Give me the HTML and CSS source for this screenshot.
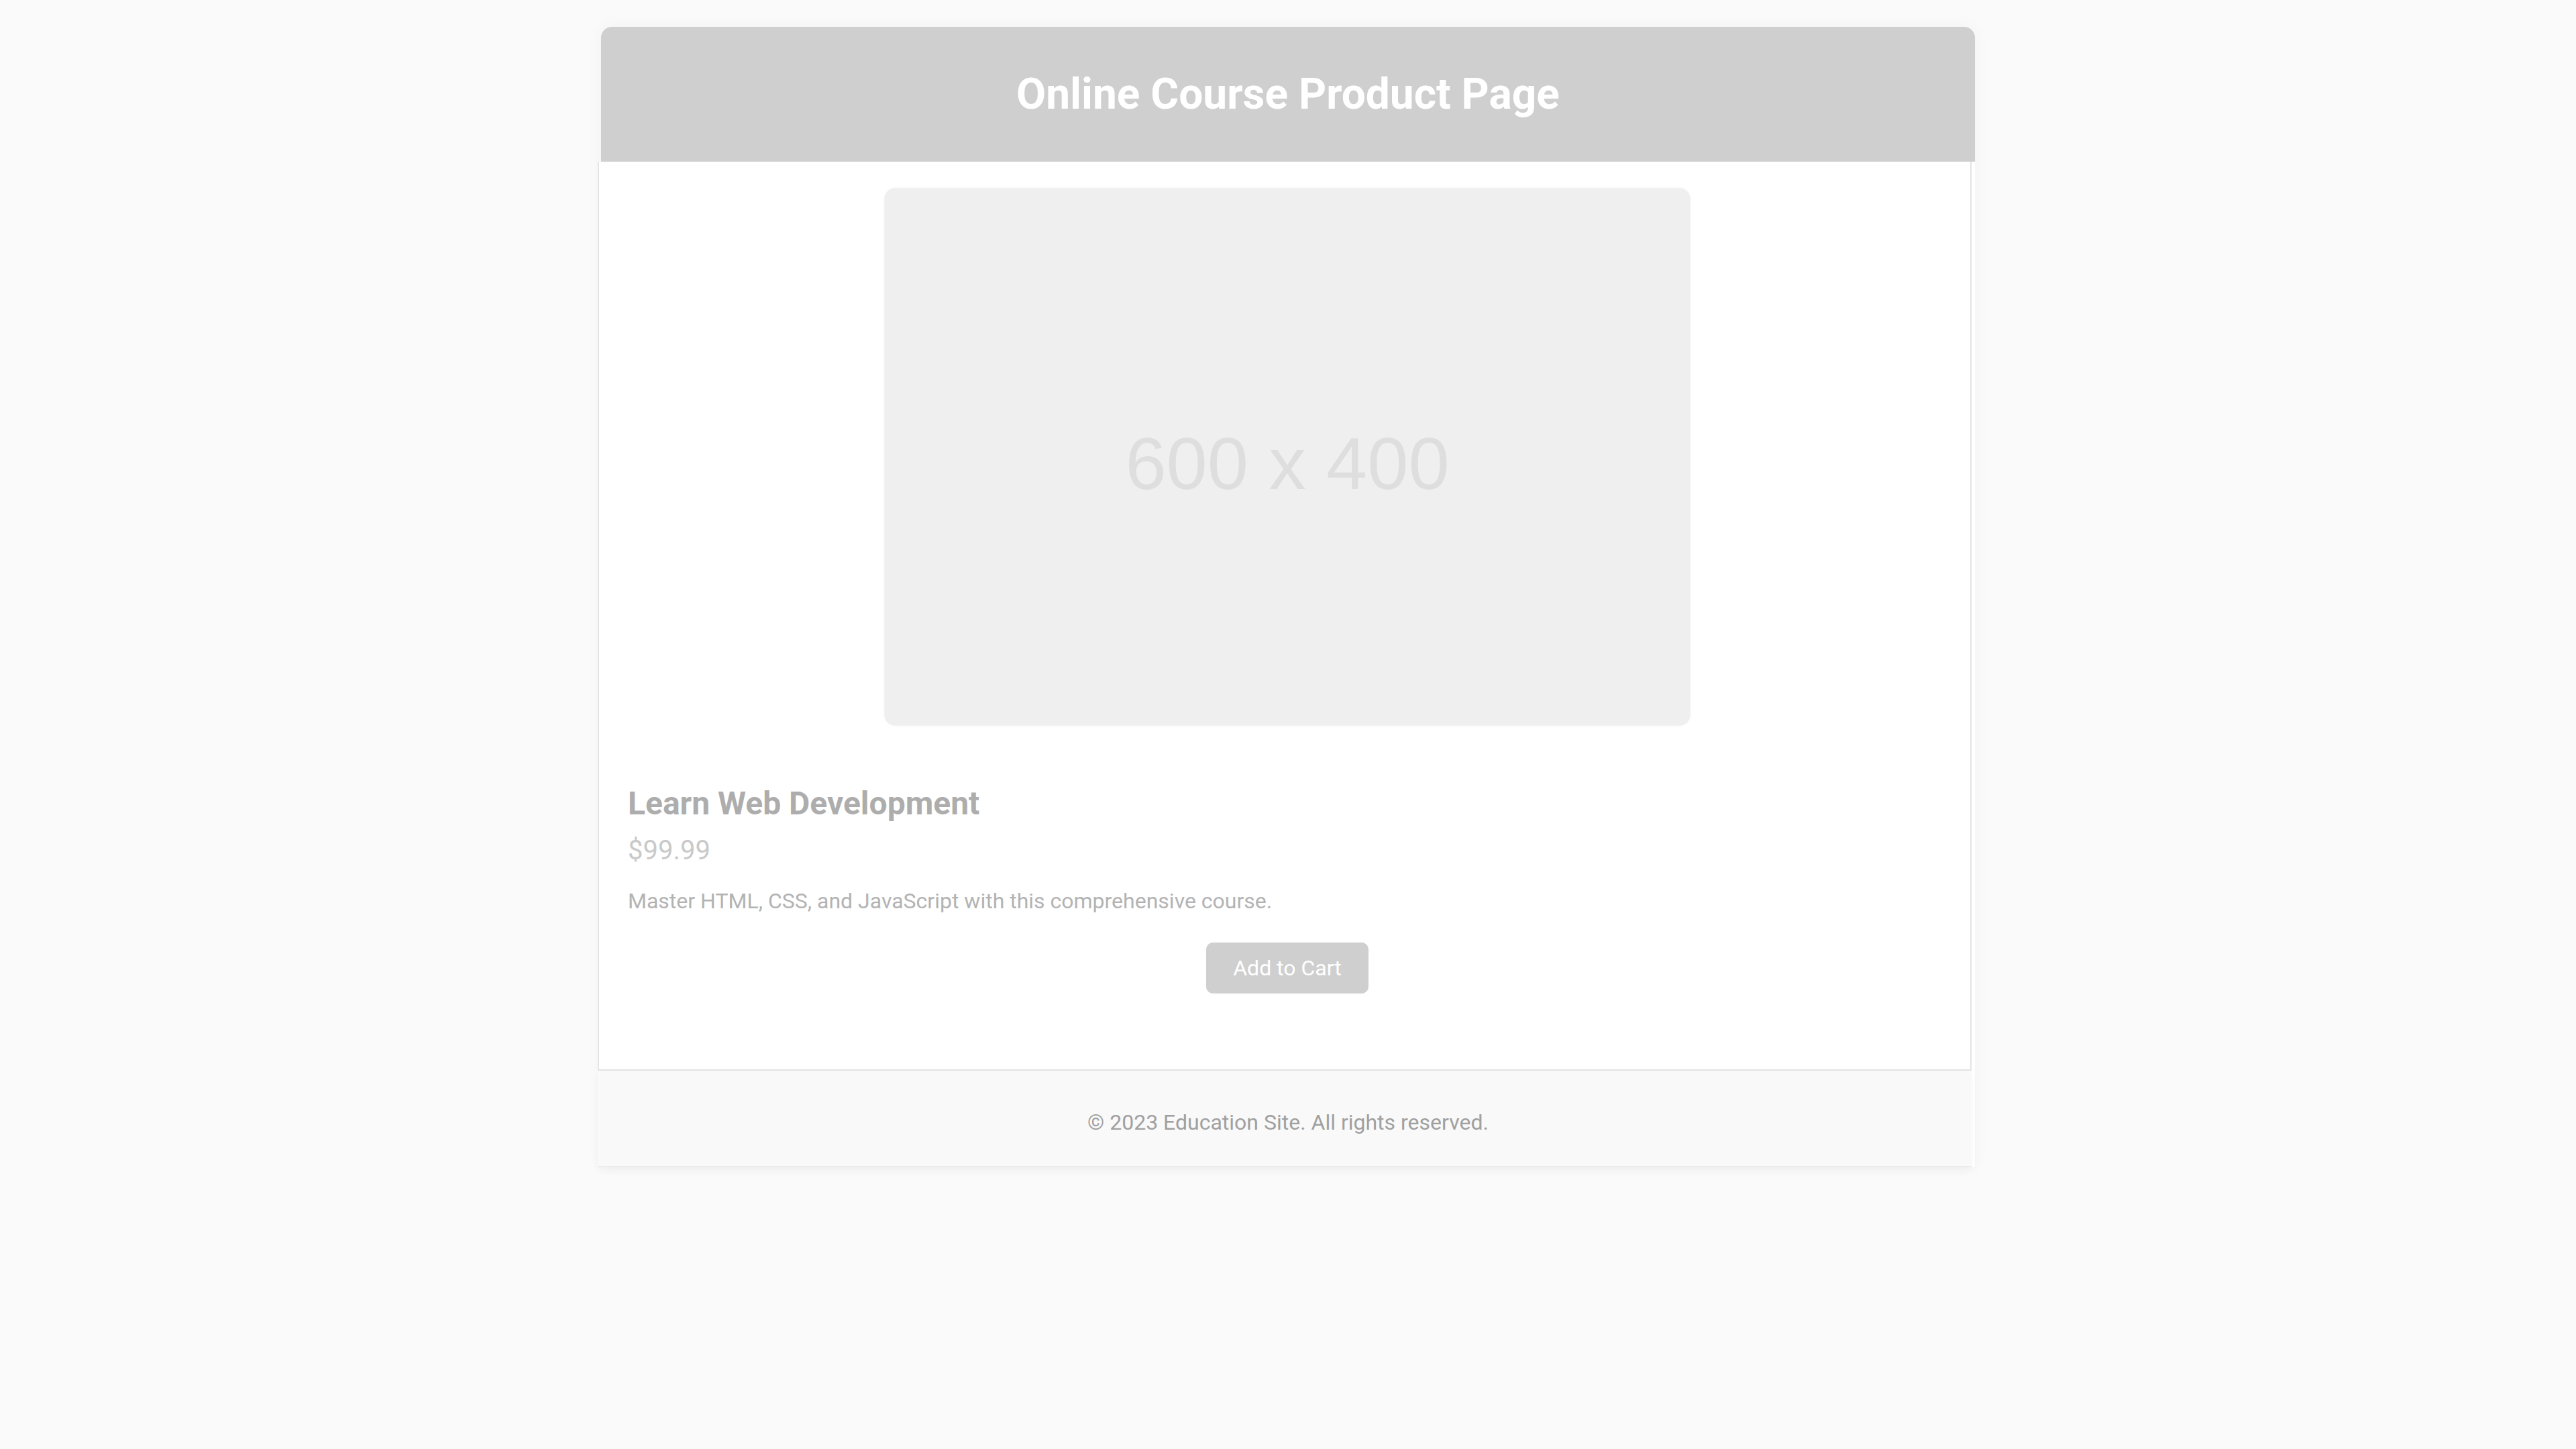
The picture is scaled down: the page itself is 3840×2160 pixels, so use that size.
FILE: index.html
```html
<!DOCTYPE html>
<html lang="en">
<head>
<meta charset="utf-8">
<title>Online Course Product Page</title>
<link rel="stylesheet" href="styles.css">
</head>
<body>
<div class="page">
  <header class="top">
    <h1 class="title">Online Course Product Page</h1>
  </header>
  <main class="product">
    <div class="thumb"><span class="thumb-text">600 x 400</span></div>
    <h2 class="name">Learn Web Development</h2>
    <p class="price">$99.99</p>
    <p class="desc">Master HTML, CSS, and JavaScript with this comprehensive course.</p>
    <div class="actions"><button class="cart">Add to Cart</button></div>
  </main>
  <footer class="foot">
    <p class="copy">© 2023 Education Site. All rights reserved.</p>
  </footer>
</div>
</body>
</html>
```
FILE: styles.css
```css
html, body {
  margin: 0;
  padding: 0;
}
body {
  background: #fafafa;
  font-family: Roboto, "Liberation Sans", Arial, sans-serif;
  min-height: 2160px;
}
.page {
  width: 2048px;
  margin: 40px auto 0;
  background: #ffffff;
  border-radius: 16px 16px 0 0;
  box-shadow: 0 0 24px rgba(0, 0, 0, 0.04);
}
.top {
  height: 201px;
  background: #cfcfcf;
  border-radius: 16px 16px 0 0;
  display: flex;
  align-items: center;
  justify-content: center;
}
.title {
  margin: 0;
  color: #ffffff;
  font-size: 64px;
  font-weight: 700;
  line-height: 76px;
}
.product {
  margin: 0 5px 0 -5px;
  border: 2px solid #e4e4e4;
  border-top: none;
  padding: 40px 35px 113px 43px;
  background: #ffffff;
}
.thumb {
  width: 1200px;
  height: 800px;
  margin: 0 auto;
  background: #efefef;
  border-radius: 16px;
  box-shadow: 0 0 3px rgba(0, 0, 0, 0.14);
  display: flex;
  align-items: center;
  justify-content: center;
}
.thumb-text {
  font-family: "Liberation Sans", Arial, sans-serif;
  font-size: 110px;
  color: #dedede;
  line-height: 1;
  padding-top: 20px;
}
.name {
  margin: 89px 0 0;
  font-size: 48px;
  line-height: 56px;
  font-weight: 700;
  color: #adadad;
}
.price {
  margin: 19px 0 0;
  font-size: 40px;
  line-height: 46px;
  color: #c9c9c9;
}
.desc {
  margin: 33px 0 0;
  font-size: 32px;
  line-height: 38px;
  color: #b3b3b3;
}
.actions {
  margin-top: 43px;
  display: flex;
  justify-content: center;
}
.cart {
  width: 242px;
  height: 76px;
  border: none;
  border-radius: 10px;
  background: #cfcfcf;
  color: #ffffff;
  font-family: Roboto, "Liberation Sans", Arial, sans-serif;
  font-size: 32px;
  padding: 0;
}
.foot {
  margin: 0 5px 0 -5px;
  background: #f9f9f9;
  border-bottom: 2px solid #ececec;
  box-shadow: 0 4px 12px rgba(0, 0, 0, 0.03);
  padding: 58px 0 46px 10px;
  text-align: center;
}
.copy {
  margin: 0;
  font-size: 32px;
  line-height: 38px;
  color: #a0a0a0;
}
```
